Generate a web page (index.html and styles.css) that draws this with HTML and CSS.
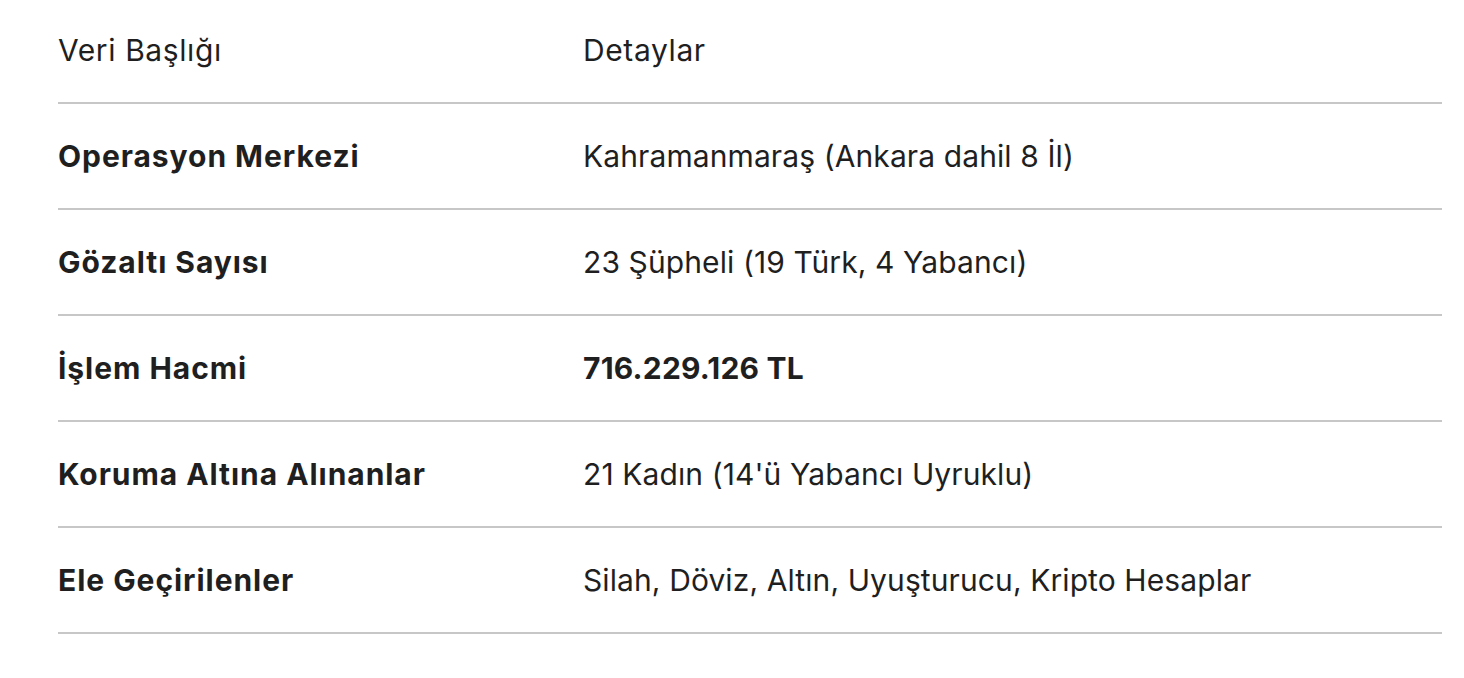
FILE: index.html
```html
<!DOCTYPE html>
<html lang="tr">
<head>
<meta charset="utf-8">
<link rel="stylesheet" href="styles.css">
</head>
<body>
<div class="table">
  <div class="row head">
    <div class="c1">Veri Başlığı</div>
    <div class="c2">Detaylar</div>
  </div>
  <div class="row">
    <div class="c1 b">Operasyon Merkezi</div>
    <div class="c2">Kahramanmaraş (Ankara dahil 8 İl)</div>
  </div>
  <div class="row">
    <div class="c1 b">Gözaltı Sayısı</div>
    <div class="c2">23 Şüpheli (19 Türk, 4 Yabancı)</div>
  </div>
  <div class="row">
    <div class="c1 b">İşlem Hacmi</div>
    <div class="c2 b">716.229.126 TL</div>
  </div>
  <div class="row">
    <div class="c1 b">Koruma Altına Alınanlar</div>
    <div class="c2">21 Kadın (14'ü Yabancı Uyruklu)</div>
  </div>
  <div class="row">
    <div class="c1 b">Ele Geçirilenler</div>
    <div class="c2">Silah, Döviz, Altın, Uyuşturucu, Kripto Hesaplar</div>
  </div>
</div>
</body>
</html>
```
FILE: styles.css
```css
html, body {
  margin: 0;
  padding: 0;
  background: #ffffff;
}
body {
  font-family: "Inter", "Open Sans", sans-serif;
  font-size: 30px;
  letter-spacing: 0.1px;
  color: #1f1f1f;
}
.table {
  margin-left: 58px;
  width: 1384px;
}
.row {
  display: grid;
  grid-template-columns: 525px 1fr;
  align-items: center;
  height: 104px;
  border-bottom: 2px solid #c7c7c7;
}
.row.head {
  height: 100px;
  padding-bottom: 2px;
}
.head .c1,
.head .c2 {
  letter-spacing: 0.6px;
}
.b {
  font-weight: 700;
  letter-spacing: 0.2px;
}
.c1.b {
  letter-spacing: 0.95px;
}
```
